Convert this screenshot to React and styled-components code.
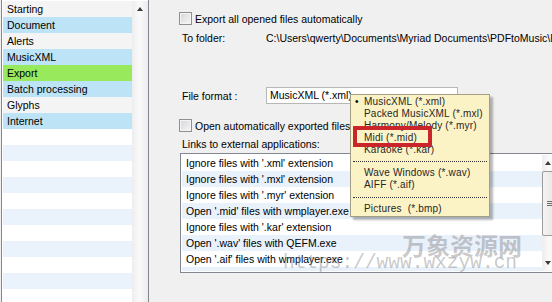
import React from "react";
import styled, { createGlobalStyle } from "styled-components";

const GlobalStyle = createGlobalStyle`
  html, body {
    margin: 0;
    padding: 0;
    background: #f0f0f0;
    overflow: hidden;
  }
  body {
    font-family: "Liberation Sans", Arial, sans-serif;
    font-size: 10.5px;
    color: #000;
  }
`;

const Window = styled.div`
  position: relative;
  display: flex;
  width: 552px;
  height: 302px;
  overflow: hidden;
  background: #f0f0f0;
`;

// left category list
const Sidebar = styled.div`
  display: flex;
  flex-shrink: 0;
  box-sizing: border-box;
  width: 148px;
  height: 330px;
  margin: -1px 0 0 1px;
  padding: 1px 0 0 1px;
  border: 1px solid #828790;
  background: #fff;
`;

const Rows = styled.div`
  display: flex;
  flex-direction: column;
  width: 129px;
`;

const CatRow = styled.div`
  height: 16px;
  line-height: 16px;
  padding-left: 4px;
  white-space: nowrap;
  background: ${(p) => p.$bg};
`;

const VScroll = styled.div`
  position: relative;
  display: flex;
  flex-direction: column;
  width: ${(p) => p.$w || 16}px;
  flex-shrink: 0;
  background: linear-gradient(to right, #ededed, #fafafa 45%, #ececec);
`;

const ArrowBtn = styled.div`
  display: flex;
  align-items: center;
  justify-content: ${(p) => (p.$left ? "flex-start" : "center")};
  padding-left: ${(p) => (p.$left ? 3 : 0)}px;
  height: 16px;
  flex-shrink: 0;
`;

const Tri = styled.div`
  width: 0;
  height: 0;
  border-left: 3.5px solid transparent;
  border-right: 3.5px solid transparent;
  ${(p) =>
    p.$down
      ? "border-top: 4px solid #3c3c3c;"
      : "border-bottom: 4px solid #3c3c3c;"}
`;

const Track = styled.div`
  flex: 1;
  display: flex;
  flex-direction: column;
`;

const Thumb = styled.div`
  display: flex;
  align-items: center;
  box-sizing: border-box;
  height: 65px;
  padding-left: 4px;
  border: 1px solid #9c9c9c;
  border-radius: 2px;
  background: linear-gradient(to right, #f4f4f4, #e2e2e2);
`;

const Grip = styled.div`
  width: 7px;
  height: 5px;
  background: repeating-linear-gradient(
    to bottom,
    #6b6b6b 0 1px,
    transparent 1px 2px
  );
`;

// right settings panel
const Panel = styled.div`
  flex: 1;
  display: flex;
  flex-direction: column;
  padding-left: 33px;
  min-width: 0;
`;

const CheckRow = styled.div`
  display: flex;
  align-items: center;
  gap: 3px;
  height: 13px;
  margin: ${(p) => p.$mt}px 0 0 -3px;
  white-space: nowrap;
`;

const Box = styled.div`
  box-sizing: border-box;
  width: 13px;
  height: 13px;
  border: 1px solid #8e8f8f;
  background: linear-gradient(135deg, #d3d6da, #f7f7f7);
  box-shadow: inset 0 0 0 1px #f4f4f4;
`;

const FieldRow = styled.div`
  display: flex;
  align-items: center;
  height: ${(p) => p.$h}px;
  margin-top: ${(p) => p.$mt}px;
  white-space: nowrap;
`;

const Label = styled.div`
  width: 84px;
  flex-shrink: 0;
`;

const Path = styled.div`
  white-space: nowrap;
`;

const ComboWrap = styled.div`
  position: relative;
  width: 192px;
  height: 17px;
`;

const Combo = styled.div`
  box-sizing: border-box;
  height: 17px;
  padding-left: 3px;
  line-height: 15px;
  border: 1px solid #b7b7b7;
  background: #fff;
`;

const Caption = styled.div`
  height: 14px;
  line-height: 14px;
  margin-top: ${(p) => p.$mt}px;
`;

const LinkList = styled.div`
  display: flex;
  box-sizing: border-box;
  width: 381px;
  height: 120px;
  margin: 2px 0 0 -2px;
  padding: 1px;
  border: 1px solid #828790;
  background: #fff;
  flex-shrink: 0;
`;

const LinkRows = styled.div`
  flex: 1;
  display: flex;
  flex-direction: column;
  overflow: hidden;
`;

const LinkRow = styled.div`
  height: 16px;
  line-height: 16px;
  padding-left: 4px;
  flex-shrink: 0;
  white-space: nowrap;
  background: ${(p) => (p.$alt ? "#e9f1fb" : "#fff")};
`;

// format drop-down menu
const Menu = styled.div`
  position: absolute;
  left: 84px;
  top: 7px;
  box-sizing: border-box;
  width: 140px;
  height: 123px;
  padding: 1px 2px 0 2px;
  border: 1px solid #a39f86;
  background: #fbf3c6;
  box-shadow: 3px 3px 2px rgba(0, 0, 0, 0.28);
  font-size: 10px;
  letter-spacing: 0.2px;
  color: #262626;
  z-index: 2;
`;

const MenuItem = styled.div`
  position: relative;
  height: 12px;
  line-height: 12px;
  padding-left: 11px;
  white-space: pre;
`;

const Bullet = styled.span`
  position: absolute;
  left: 2px;
  top: 0;
  color: #000;
`;

const Sep = styled.div`
  display: flex;
  align-items: center;
  height: ${(p) => p.$h}px;
  &::after {
    content: "";
    flex: 1;
    border-top: 1px dotted #333;
  }
`;

const Highlight = styled.div`
  position: absolute;
  left: 2px;
  top: 31px;
  width: 79px;
  height: 21px;
  box-sizing: border-box;
  border: 4px solid #c9252a;
`;

const Mark = styled.div`
  position: absolute;
  left: ${(p) => p.$x}px;
  top: ${(p) => p.$y}px;
  font-family: ${(p) => p.$font};
  font-size: ${(p) => p.$size}px;
  font-weight: ${(p) => p.$weight || 400};
  color: rgba(125, 125, 125, 0.42);
  white-space: nowrap;
  pointer-events: none;
  z-index: 3;
`;

const categories = [
  { name: "Starting", bg: "#f4f4f4" },
  { name: "Document", bg: "#bde3f7" },
  { name: "Alerts", bg: "#f4f4f4" },
  { name: "MusicXML", bg: "#bde3f7" },
  { name: "Export", bg: "#98ea5c" },
  { name: "Batch processing", bg: "#bde3f7" },
  { name: "Glyphs", bg: "#f4f4f4" },
  { name: "Internet", bg: "#bde3f7" },
];

const links = [
  "Ignore files with '.xml' extension",
  "Ignore files with '.mxl' extension",
  "Ignore files with '.myr' extension",
  "Open '.mid' files with wmplayer.exe",
  "Ignore files with '.kar' extension",
  "Open '.wav' files with QEFM.exe",
  "Open '.aif' files with wmplayer.exe",
  "Open '.bmp' files with mspaint.exe",
];

const formats = [
  { label: "MusicXML (*.xml)", checked: true },
  { label: "Packed MusicXML (*.mxl)" },
  { label: "Harmony/Melody (*.myr)" },
  { label: "Midi (*.mid)" },
  { label: "Karaoke (*.kar)" },
  { sep: 11 },
  { label: "Wave Windows (*.wav)" },
  { label: "AIFF (*.aif)" },
  { sep: 12 },
  { label: "Pictures  (*.bmp)" },
];

export default function App() {
  const empty = Array.from({ length: 12 }, (_, i) => i);

  return (
    <Window>
      <GlobalStyle />
      <Sidebar>
        <Rows>
          {categories.map((c) => (
            <CatRow key={c.name} $bg={c.bg}>
              {c.name}
            </CatRow>
          ))}
          {empty.map((i) => (
            <CatRow key={i} $bg={i % 2 ? "#eaf2fb" : "#fff"} />
          ))}
        </Rows>
        <VScroll>
          <ArrowBtn>
            <Tri />
          </ArrowBtn>
        </VScroll>
      </Sidebar>

      <Panel>
        <CheckRow $mt={12}>
          <Box />
          <span>Export all opened files automatically</span>
        </CheckRow>
        <FieldRow $h={14} $mt={6}>
          <Label>To folder:</Label>
          <Path>C:\Users\qwerty\Documents\Myriad Documents\PDFtoMusic\Export</Path>
        </FieldRow>
        <FieldRow $h={17} $mt={42}>
          <Label>File format :</Label>
          <ComboWrap>
            <Combo>MusicXML (*.xml)</Combo>
            <Menu>
              {formats.map((f, i) =>
                f.sep ? (
                  <Sep key={i} $h={f.sep} />
                ) : (
                  <MenuItem key={i}>
                    {f.checked && <Bullet>•</Bullet>}
                    {f.label}
                  </MenuItem>
                )
              )}
              <Highlight />
            </Menu>
          </ComboWrap>
        </FieldRow>
        <CheckRow $mt={15}>
          <Box />
          <span>Open automatically exported files</span>
        </CheckRow>
        <Caption $mt={5}>Links to external applications:</Caption>
        <LinkList>
          <LinkRows>
            {links.map((l, i) => (
              <LinkRow key={l} $alt={i % 2 === 1}>
                {l}
              </LinkRow>
            ))}
          </LinkRows>
          <VScroll $w={17}>
            <ArrowBtn $left>
              <Tri />
            </ArrowBtn>
            <Track>
              <Thumb>
                <Grip />
              </Thumb>
            </Track>
            <ArrowBtn $left>
              <Tri $down />
            </ArrowBtn>
          </VScroll>
        </LinkList>
      </Panel>

      <Mark
        $x={402}
        $y={227}
        $size={24}
        $weight={700}
        $font={`"Noto Sans CJK SC", sans-serif`}
      >
        万象资源网
      </Mark>
      <Mark
        $x={283}
        $y={252}
        $size={19.5}
        $font={`"Liberation Mono", monospace`}
      >
        https://www.wxzyw.cn
      </Mark>
    </Window>
  );
}
